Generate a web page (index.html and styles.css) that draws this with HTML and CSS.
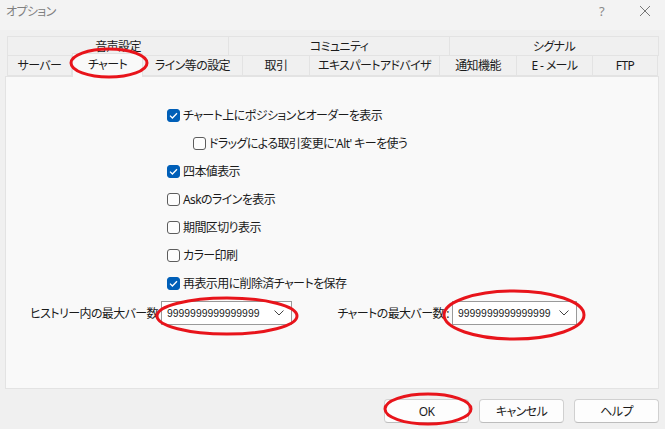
FILE: index.html
```html
<!DOCTYPE html>
<html lang="ja">
<head>
  <meta charset="UTF-8">
  <meta name="viewport" content="width=device-width, initial-scale=1.0">
  <title>オプション</title>
  <link rel="stylesheet" href="styles.css">
</head>
<body>
  <!-- Title Bar -->
  <div class="titlebar">
    <span class="title">オプション</span>
    <div class="title-buttons">
      <span class="help">?</span>
      <svg class="close" width="12" height="12" viewBox="0 0 12 12">
        <path d="M1 1 L11 11 M11 1 L1 11" stroke="#777" stroke-width="1" fill="none"/>
      </svg>
    </div>
  </div>

  <!-- Tabs -->
  <div class="tabs">
    <div class="tab-row">
      <div class="tab w-222">音声設定</div>
      <div class="tab w-221">コミュニティ</div>
      <div class="tab w-209">シグナル</div>
    </div>
    <div class="tab-row">
      <div class="tab w-65">サーバー</div>
      <div class="tab tab-active w-71">チャート</div>
      <div class="tab w-100">ライン等の設定</div>
      <div class="tab w-67">取引</div>
      <div class="tab w-130">エキスパートアドバイザ</div>
      <div class="tab w-77">通知機能</div>
      <div class="tab w-76">E - メール</div>
      <div class="tab w-65">FTP</div>
    </div>
  </div>

  <!-- Panel -->
  <div class="panel">
    <div class="options">
      <label class="option"><span class="check checked"></span>チャート上にポジションとオーダーを表示</label>
      <label class="option sub"><span class="check"></span>ドラッグによる取引変更に'Alt' キーを使う</label>
      <label class="option"><span class="check checked"></span>四本値表示</label>
      <label class="option"><span class="check"></span>Askのラインを表示</label>
      <label class="option"><span class="check"></span>期間区切り表示</label>
      <label class="option"><span class="check"></span>カラー印刷</label>
      <label class="option"><span class="check checked"></span>再表示用に削除済チャートを保存</label>
    </div>
    <div class="bars-row">
      <span class="bars-label first">ヒストリー内の最大バー数</span>
      <div class="combo first-combo">
        <span>9999999999999999</span>
        <svg width="10" height="6" viewBox="0 0 10 6"><path d="M0.5 0.5 L5 5 L9.5 0.5" stroke="#444" stroke-width="1" fill="none"/></svg>
      </div>
      <span class="bars-label second">チャートの最大バー数 :</span>
      <div class="combo second-combo">
        <span>9999999999999999</span>
        <svg width="10" height="6" viewBox="0 0 10 6"><path d="M0.5 0.5 L5 5 L9.5 0.5" stroke="#444" stroke-width="1" fill="none"/></svg>
      </div>
    </div>
  </div>

  <!-- Footer Buttons -->
  <div class="footer">
    <button class="btn">OK</button>
    <button class="btn">キャンセル</button>
    <button class="btn">ヘルプ</button>
  </div>

  <!-- Red annotations -->
  <svg class="marks" width="665" height="429" viewBox="0 0 665 429">
    <g fill="none" stroke="#e8141b" stroke-width="3">
      <ellipse cx="109" cy="63" rx="38" ry="14"/>
      <ellipse cx="227" cy="316" rx="70" ry="18"/>
      <ellipse cx="514" cy="315" rx="70" ry="24"/>
      <ellipse cx="428" cy="409" rx="43" ry="15"/>
    </g>
  </svg>
</body>
</html>
```

FILE: styles.css
```css
body {
  margin: 0;
  width: 665px;
  height: 429px;
  overflow: hidden;
  position: relative;
  background-color: #f0f0f0;
  color: #1b1b1b;
  font-family: "Noto Sans", "Noto Sans CJK JP", sans-serif;
  font-size: 12px;
  letter-spacing: -0.6px;
  font-feature-settings: "palt";
}
.titlebar {
  height: 30px;
  display: flex;
  align-items: center;
  justify-content: space-between;
  padding: 0 0 0 6px;
  background-color: #f3f3f3;
}
.title {
  color: #808080;
  font-size: 12px;
  margin-top: -8px;
}
.title-buttons {
  display: flex;
  align-items: center;
  margin-top: -8px;
}
.help {
  color: #8a8a8a;
  font-size: 13px;
  margin-right: 35px;
}
.close {
  margin-right: 14px;
}
.tabs {
  padding: 6px 0 0 7px;
}
.tab-row {
  display: flex;
  height: 20px;
}
.tab {
  box-sizing: border-box;
  height: 20px;
  line-height: 19px;
  text-align: center;
  background-color: #f0f0f0;
  border: 1px solid #e3e3e3;
  border-left: none;
  white-space: nowrap;
}
.tab-row .tab:first-child {
  border-left: 1px solid #e3e3e3;
}
.tab-row + .tab-row .tab {
  border-top: none;
}
.tab-active {
  position: relative;
  height: 24px;
  margin-top: -3px;
  line-height: 22px;
  background-color: #f9f9f9;
  border: 1px solid #e3e3e3;
  border-bottom: none;
  z-index: 2;
}
.tab-row + .tab-row .tab-active {
  border-top: 1px solid #e3e3e3;
}
.w-222 { width: 222px; }
.w-221 { width: 221px; }
.w-209 { width: 209px; }
.w-65 { width: 65px; }
.w-71 { width: 71px; }
.w-100 { width: 100px; }
.w-67 { width: 67px; }
.w-130 { width: 130px; }
.w-77 { width: 77px; }
.w-76 { width: 76px; }
.panel {
  position: relative;
  box-sizing: border-box;
  margin-left: 5px;
  width: 654px;
  height: 313px;
  background-color: #f9f9f9;
  border: 1px solid #e3e3e3;
  z-index: 1;
}
.options {
  display: flex;
  flex-direction: column;
  padding: 24px 0 0 161px;
}
.option {
  display: flex;
  align-items: center;
  height: 28px;
  white-space: nowrap;
}
.option.sub {
  padding-left: 26px;
}
.check {
  box-sizing: border-box;
  width: 13px;
  height: 13px;
  margin-right: 3px;
  border: 1px solid #5d5d5d;
  border-radius: 3px;
  background-color: #fdfdfd;
}
.check.checked {
  border-color: #005fb8;
  background-color: #005fb8;
  background-image: url("data:image/svg+xml,%3Csvg xmlns='http://www.w3.org/2000/svg' width='13' height='13' viewBox='0 0 13 13'%3E%3Cpath d='M3 6.6 L5.4 9 L10 4.2' stroke='white' stroke-width='1.3' fill='none'/%3E%3C/svg%3E");
  background-position: -1px -1px;
}
.bars-row {
  display: flex;
  align-items: center;
  margin-top: 4px;
  height: 24px;
}
.bars-label {
  text-align: right;
  white-space: nowrap;
}
.bars-label.first {
  width: 152px;
  margin-right: 3px;
}
.bars-label.second {
  width: 157px;
  margin-right: 3px;
}
.combo {
  box-sizing: border-box;
  height: 24px;
  display: flex;
  align-items: center;
  justify-content: space-between;
  padding: 0 7px 0 5px;
  background-color: #ffffff;
  border: 1px solid #9a9a9a;
  font-family: "Liberation Sans", sans-serif;
  font-size: 10.4px;
  letter-spacing: 0;
  font-feature-settings: normal;
}
.first-combo {
  width: 131px;
}
.second-combo {
  width: 125px;
}
.footer {
  display: flex;
  justify-content: flex-end;
  gap: 10px;
  padding: 10px 6px 0 0;
}
.btn {
  box-sizing: border-box;
  width: 85px;
  height: 24px;
  padding: 0;
  background-color: #fdfdfd;
  border: 1px solid #d0d0d0;
  border-bottom-color: #bdbdbd;
  border-radius: 4px;
  font-family: "Noto Sans", "Noto Sans CJK JP", sans-serif;
  font-size: 12px;
  letter-spacing: -0.6px;
  font-feature-settings: "palt";
  color: #1b1b1b;
}
.marks {
  position: absolute;
  top: 0;
  left: 0;
  z-index: 5;
  pointer-events: none;
}
```
